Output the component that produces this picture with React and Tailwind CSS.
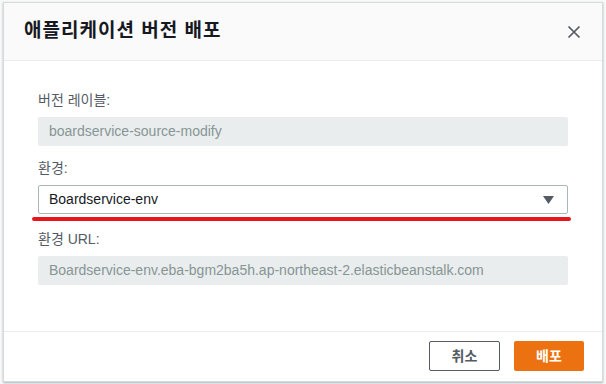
import React from "react";

const Field = ({ label, children }) => (
  <div className="flex flex-col">
    <label className="text-[14px] leading-[18px] text-[#545b64] mb-[8px]">{label}</label>
    {children}
  </div>
);

const ReadOnly = ({ value }) => (
  <div className="h-[29px] rounded-[2px] bg-[#eaeded] px-[11px] flex items-center text-[14px] text-[#879596] truncate">
    {value}
  </div>
);

export default function App() {
  return (
    <div
      className="w-[606px] h-[384px] bg-[#f7f8f8] pt-[2px] pl-[3px] pr-[3px] pb-[2px]"
      style={{ fontFamily: '"Liberation Sans", "Noto Sans CJK KR", sans-serif' }}
    >
      <div className="h-[380px] flex flex-col bg-white border border-[#d5dbdb] shadow-[0_1px_2px_rgba(0,22,43,0.3)]">
        <div className="h-[58px] flex-shrink-0 flex items-center justify-between bg-[#fafafa] border-b border-[#eaeded] pl-[20px] pr-[21px]">
          <h2 className="text-[19px] font-bold text-[#16191f] tracking-[1px]">애플리케이션 버전 배포</h2>
          <svg width="14" height="14" viewBox="0 0 14 14" className="text-[#545b64]">
            <path d="M1.5 1.5 L12.5 12.5 M12.5 1.5 L1.5 12.5" stroke="currentColor" strokeWidth="1.7" />
          </svg>
        </div>

        <div className="flex-1 flex flex-col px-[34px] pt-[30px]">
          <Field label="버전 레이블:">
            <ReadOnly value="boardservice-source-modify" />
          </Field>

          <div className="mt-[13px]">
            <Field label="환경:">
              <div className="relative">
                <div className="h-[29px] rounded-[2px] border border-[#aab7b8] bg-white px-[10px] flex items-center justify-between text-[14px] text-[#16191f]">
                  <span>Boardservice-env</span>
                  <svg width="11" height="8" viewBox="0 0 11 8" className="mr-[3px]">
                    <path d="M0 0 H11 L5.5 8 Z" fill="#545b64" />
                  </svg>
                </div>
                <div className="absolute left-[-6px] right-[-3px] top-[32px] h-[4px] rounded-full bg-[#e8151f]" />
              </div>
            </Field>
          </div>

          <div className="mt-[16px]">
            <Field label="환경 URL:">
              <ReadOnly value="Boardservice-env.eba-bgm2ba5h.ap-northeast-2.elasticbeanstalk.com" />
            </Field>
          </div>
        </div>

        <div className="h-[50px] flex-shrink-0 border-t border-[#eaeded] flex items-center justify-end gap-[14px] pr-[18px] pb-[1px]">
          <button className="w-[71px] h-[30px] rounded-[2px] border border-[#545b64] bg-white text-[14px] font-bold text-[#545b64]">
            취소
          </button>
          <button className="w-[70px] h-[30px] rounded-[2px] bg-[#ec7211] text-[14px] font-bold text-white">
            배포
          </button>
        </div>
      </div>
    </div>
  );
}
